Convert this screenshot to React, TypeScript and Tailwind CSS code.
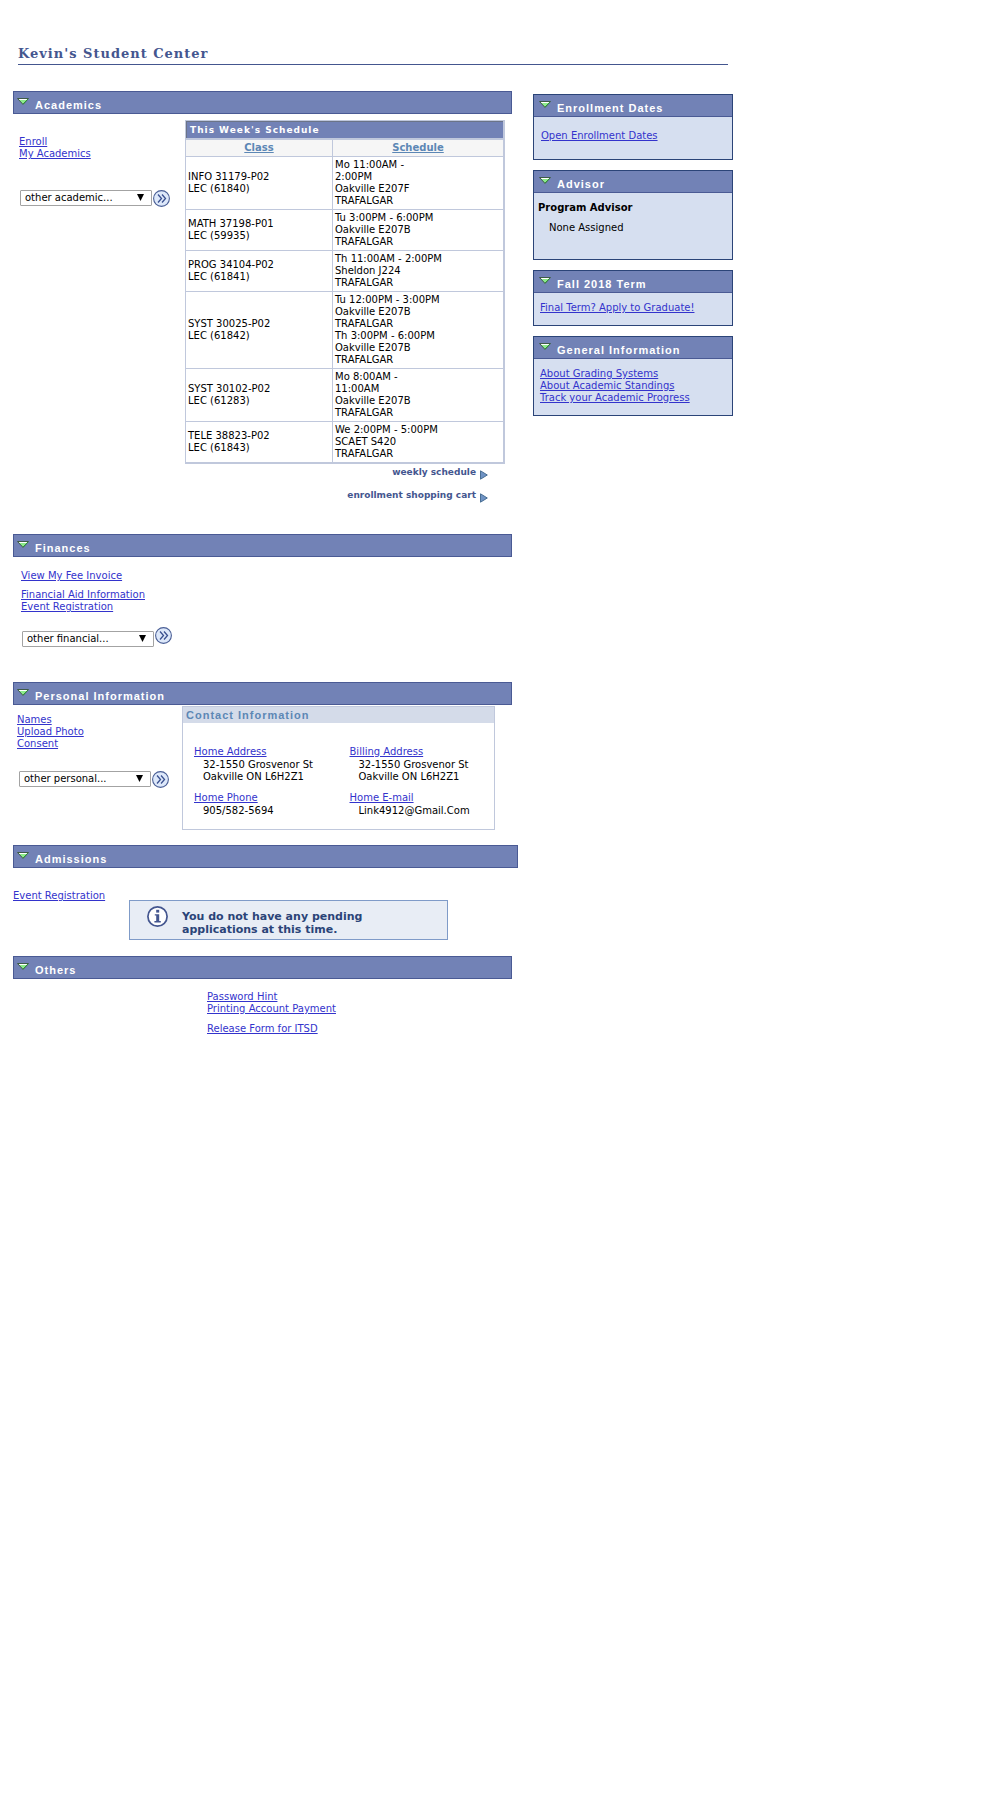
import type { ReactNode } from "react";

const sans = "font-['DejaVu_Sans','Verdana',sans-serif]";
const arial = "font-['Liberation_Sans','Arial',sans-serif]";

function CollapseIcon() {
  return (
    <svg width="12" height="7" viewBox="0 0 12 7" className="shrink-0" aria-hidden="true">
      <path d="M0.5 0.5H11.5L6 6.4Z" fill="#8cec8c" stroke="#3f5a48" />
      <path d="M2.2 1.5H9.8" stroke="#fff" />
      <path d="M11 1L6 6.2" stroke="#2f8f35" />
    </svg>
  );
}

function SectionBar({ title, bordered = true }: { title: string; bordered?: boolean }) {
  return (
    <h2
      className={`flex items-start bg-[#7282b6] ${
        bordered ? "h-[23px] border border-[#4a5a94] pl-[3px]" : "h-[22px] border-b border-[#4a5a94] pl-[5px]"
      }`}
    >
      <button type="button" aria-expanded="true" className="flex items-start text-left">
        <span className="pt-1.5">
          <CollapseIcon />
        </span>
        <span className={`${arial} pt-1.5 pl-1.5 text-[11px] leading-[15px] font-bold tracking-[1px] text-white`}>
          {title}
        </span>
      </button>
    </h2>
  );
}

function Link({ children }: { children: ReactNode }) {
  return (
    <a href="#" className="text-[#3333cc] underline">
      {children}
    </a>
  );
}

function ActionPicker({ label, option, raised = false }: { label: string; option: string; raised?: boolean }) {
  return (
    <form className="flex items-start gap-px" onSubmit={(e) => e.preventDefault()}>
      <div className={`relative w-[132px] ${raised ? "mt-1" : ""}`}>
        <select
          aria-label={label}
          className="block h-4 w-full appearance-none rounded-[1px] border border-[#a3a3a3] bg-white pr-5 pl-1 text-[10px] leading-[14px] text-black"
        >
          <option>{option}</option>
        </select>
        <svg width="7" height="7" viewBox="0 0 7 7" className="pointer-events-none absolute top-1 right-2" aria-hidden="true">
          <path d="M0 0H7L3.5 7Z" fill="#000" />
        </svg>
      </div>
      <button type="submit" aria-label="Go" className="block">
        <svg width="17" height="17" viewBox="0 0 17 17" aria-hidden="true">
          <circle cx="8.5" cy="8.5" r="7.9" fill="#dde8fa" stroke="#4a5f96" strokeWidth="1.1" />
          <path d="M5 4.5L8.5 8.5L5 12.5M9 4.5L12.5 8.5L9 12.5" fill="none" stroke="#3a5090" strokeWidth="1.3" />
        </svg>
      </button>
    </form>
  );
}

function ArrowLink({ children }: { children: ReactNode }) {
  return (
    <a href="#" className="flex items-start gap-1 text-[9px] leading-[12px] font-bold text-[#44568f]">
      {children}
      <svg width="8" height="10" viewBox="0 0 8 10" className="mt-1" aria-hidden="true">
        <path d="M0.5 0.8L7.3 5L0.5 9.2Z" fill="#6f93c4" stroke="#4a6f94" />
      </svg>
    </a>
  );
}

const schedule = [
  { course: "INFO 31179-P02", section: "LEC (61840)", lines: ["Mo 11:00AM -", "2:00PM", "Oakville E207F", "TRAFALGAR"] },
  { course: "MATH 37198-P01", section: "LEC (59935)", lines: ["Tu 3:00PM - 6:00PM", "Oakville E207B", "TRAFALGAR"] },
  { course: "PROG 34104-P02", section: "LEC (61841)", lines: ["Th 11:00AM - 2:00PM", "Sheldon J224", "TRAFALGAR"] },
  {
    course: "SYST 30025-P02",
    section: "LEC (61842)",
    lines: ["Tu 12:00PM - 3:00PM", "Oakville E207B", "TRAFALGAR", "Th 3:00PM - 6:00PM", "Oakville E207B", "TRAFALGAR"],
  },
  { course: "SYST 30102-P02", section: "LEC (61283)", lines: ["Mo 8:00AM -", "11:00AM", "Oakville E207B", "TRAFALGAR"] },
  { course: "TELE 38823-P02", section: "LEC (61843)", lines: ["We 2:00PM - 5:00PM", "SCAET S420", "TRAFALGAR"] },
];

function ScheduleTable() {
  return (
    <div className="border border-r-2 border-b-2 border-[#c0c8dc]">
      <h3 className="h-[17px] border-t border-l border-[#6b7488] bg-[#7282b6] pl-[3px] text-[9px] leading-[16px] font-bold tracking-[1px] text-white">
        This Week's Schedule
      </h3>
      <table className="w-full border-separate border-spacing-0 border-t-2 border-[#c0c8dc]">
        <thead>
          <tr className="bg-[#f6f6f6]">
            <th className="w-[147px] border-r border-b border-[#c0c8dc] px-0 py-0.5">
              <a href="#" className="text-[#5c87b5] underline">Class</a>
            </th>
            <th className="border-b border-[#c0c8dc] px-0 py-0.5">
              <a href="#" className="text-[#5c87b5] underline">Schedule</a>
            </th>
          </tr>
        </thead>
        <tbody>
          {schedule.map((row) => (
            <tr key={row.course} className="group">
              <td className="border-r border-b border-[#c0c8dc] p-0.5 align-middle group-last:border-b-0">
                {row.course}
                <br />
                {row.section}
              </td>
              <td className="border-b border-[#c0c8dc] p-0.5 group-last:border-b-0">
                {row.lines.map((line, i) => (
                  <div key={i}>{line}</div>
                ))}
              </td>
            </tr>
          ))}
        </tbody>
      </table>
    </div>
  );
}

function Contact({ label, lines }: { label: string; lines: string[] }) {
  return (
    <div className="pl-[11px]">
      <Link>{label}</Link>
      <div className="mt-px pl-[9px]">
        {lines.map((l) => (
          <div key={l}>{l}</div>
        ))}
      </div>
    </div>
  );
}

function SideBox({ title, className, children }: { title: string; className: string; children: ReactNode }) {
  return (
    <section className="border border-[#2b4478] bg-[#d6dff0]">
      <SectionBar title={title} bordered={false} />
      <div className={className}>{children}</div>
    </section>
  );
}

export default function App() {
  return (
    <div className={`${sans} min-h-screen bg-white text-[10px] leading-[12px] text-black`}>
      <div className="max-w-[733px] pl-[13px]">
        <header className="mr-[5px] ml-[5px] border-b border-[#44568f] pt-[45px]">
          <h1 className="font-['DejaVu_Serif','Georgia',serif] pb-px text-[13px] leading-[18px] font-bold tracking-[1px] text-[#44568f]">
            Kevin's Student Center
          </h1>
        </header>

        <div className="flex items-start gap-[21px] pt-[26px]">
          <main className="min-w-0 flex-1">
            <section className="pb-[31px]">
              <SectionBar title="Academics" />
              <div className="flex pt-1.5">
                <div className="min-w-0 flex-1 pt-4 pl-1.5">
                  <div className="flex flex-col items-start">
                    <Link>Enroll</Link>
                    <Link>My Academics</Link>
                  </div>
                  <div className="pt-[30px] pl-px">
                    <ActionPicker label="Other academic actions" option="other academic..." />
                  </div>
                </div>
                <div className="mr-[7px] w-[320px]">
                  <ScheduleTable />
                  <div className="flex flex-col items-end gap-[9px] pt-0.5 pr-[17px]">
                    <ArrowLink>weekly schedule</ArrowLink>
                    <ArrowLink>enrollment shopping cart</ArrowLink>
                  </div>
                </div>
              </div>
            </section>

            <section className="pb-[35px]">
              <SectionBar title="Finances" />
              <div className="flex flex-col items-start pt-[13px] pl-2">
                <Link>View My Fee Invoice</Link>
                <div className="flex flex-col items-start pt-[7px]">
                  <Link>Financial Aid Information</Link>
                  <Link>Event Registration</Link>
                </div>
                <div className="pt-3.5 pl-px">
                  <ActionPicker label="Other financial actions" option="other financial..." raised />
                </div>
              </div>
            </section>

            <section className="pb-[15px]">
              <SectionBar title="Personal Information" />
              <div className="flex pt-px">
                <div className="min-w-0 flex-1 pt-2 pl-1">
                  <div className="flex flex-col items-start">
                    <Link>Names</Link>
                    <Link>Upload Photo</Link>
                    <Link>Consent</Link>
                  </div>
                  <div className="pt-[21px] pl-0.5">
                    <ActionPicker label="Other personal actions" option="other personal..." />
                  </div>
                </div>
                <div className="mr-[17px] w-[313px] border border-[#c0c8dc]">
                  <h3 className={`${arial} bg-[#d4dbe9] pl-[3px] text-[11px] leading-[16px] font-bold tracking-[1px] text-[#5c87b5]`}>
                    Contact Information
                  </h3>
                  <div className="grid grid-cols-2 gap-y-[9px] pt-[23px] pb-3">
                    <Contact label="Home Address" lines={["32-1550 Grosvenor St", "Oakville ON L6H2Z1"]} />
                    <Contact label="Billing Address" lines={["32-1550 Grosvenor St", "Oakville ON L6H2Z1"]} />
                    <Contact label="Home Phone" lines={["905/582-5694"]} />
                    <Contact label="Home E-mail" lines={["Link4912@Gmail.Com"]} />
                  </div>
                </div>
              </div>
            </section>

            <section className="pb-4">
              <div className="-mr-1.5">
                <SectionBar title="Admissions" />
              </div>
              <div className="flex items-start pt-[22px]">
                <div className="w-[116px]">
                  <Link>Event Registration</Link>
                </div>
                <div role="status" className="mt-2.5 flex w-[319px] items-start border border-[#7f9bc8] bg-[#e8edf5] pt-[5px] pb-[3px] pl-[17px]">
                  <svg width="21" height="21" viewBox="0 0 21 21" className="shrink-0" aria-hidden="true">
                    <circle cx="10.5" cy="10.5" r="9.6" fill="#fff" stroke="#44568f" strokeWidth="1.7" />
                    <rect x="9.2" y="3.8" width="3" height="2.8" fill="#44568f" />
                    <path d="M7.8 8.2H12.2V15H13.8V16.4H7.4V15H9.2V9.6H7.8Z" fill="#44568f" />
                  </svg>
                  <p className="pt-1 pl-3.5 text-[11px] leading-[13px] font-bold text-[#2b4478]">
                    You do not have any pending
                    <br />
                    applications at this time.
                  </p>
                </div>
              </div>
            </section>

            <section>
              <SectionBar title="Others" />
              <div className="flex flex-col items-start pt-3 pl-[194px]">
                <Link>Password Hint</Link>
                <Link>Printing Account Payment</Link>
                <div className="pt-2">
                  <Link>Release Form for ITSD</Link>
                </div>
              </div>
            </section>
          </main>

          <aside className="mt-[3px] flex w-[200px] shrink-0 flex-col gap-2.5">
            <SideBox title="Enrollment Dates" className="pt-[13px] pb-[17px] pl-[7px]">
              <Link>Open Enrollment Dates</Link>
            </SideBox>
            <SideBox title="Advisor" className="pt-[9px] pb-[25px] pl-1">
              <h3 className="font-bold">Program Advisor</h3>
              <p className="pt-2 pl-[11px]">None Assigned</p>
            </SideBox>
            <SideBox title="Fall 2018 Term" className="pt-[9px] pb-[11px] pl-1.5">
              <Link>Final Term? Apply to Graduate!</Link>
            </SideBox>
            <SideBox title="General Information" className="flex flex-col items-start pt-[9px] pb-[11px] pl-1.5">
              <Link>About Grading Systems</Link>
              <Link>About Academic Standings</Link>
              <Link>Track your Academic Progress</Link>
            </SideBox>
          </aside>
        </div>
      </div>
    </div>
  );
}
